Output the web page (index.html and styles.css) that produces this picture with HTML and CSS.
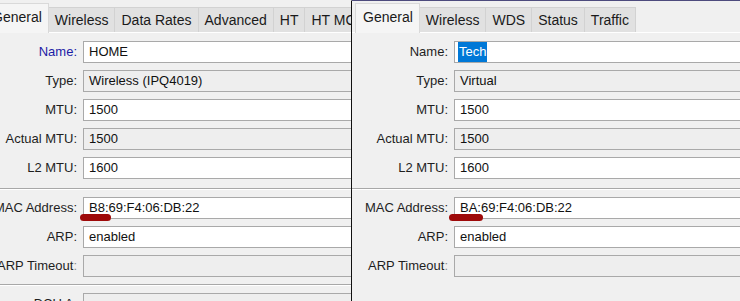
FILE: index.html
```html
<!DOCTYPE html>
<html lang="en">
<head>
    <meta charset="UTF-8">
    <title>Interface settings</title>
    <link rel="stylesheet" href="styles.css">
</head>
<body>
    <div class="screen">
        <div class="pane pane-left">
            <div class="win win-shift">
                <div class="tabs">
                    <div class="tab active">General</div>
                    <div class="tab">Wireless</div>
                    <div class="tab">Data Rates</div>
                    <div class="tab">Advanced</div>
                    <div class="tab">HT</div>
                    <div class="tab">HT MCS</div>
                </div>
                <div class="form">
                    <div class="row"><span class="label label-blue">Name:</span><div class="field">HOME</div></div>
                    <div class="row"><span class="label">Type:</span><div class="field ro">Wireless (IPQ4019)</div></div>
                    <div class="row"><span class="label">MTU:</span><div class="field">1500</div></div>
                    <div class="row"><span class="label">Actual MTU:</span><div class="field ro">1500</div></div>
                    <div class="row"><span class="label">L2 MTU:</span><div class="field">1600</div></div>
                    <div class="sep"></div>
                    <div class="row"><span class="label">MAC Address:</span><div class="field">B8:69:F4:06:DB:22<span class="mark mark-left"></span></div></div>
                    <div class="row"><span class="label">ARP:</span><div class="field">enabled</div></div>
                    <div class="row"><span class="label">ARP Timeout<span class="dim">:</span></span><div class="field ro"></div></div>
                    <div class="sep sep-low"></div>
                    <div class="row"><span class="label">DCU A:</span><div class="field ro"></div></div>
                </div>
            </div>
        </div>
        <div class="pane pane-right">
            <div class="win">
                <div class="tabs">
                    <div class="tab active">General</div>
                    <div class="tab">Wireless</div>
                    <div class="tab">WDS</div>
                    <div class="tab">Status</div>
                    <div class="tab">Traffic</div>
                </div>
                <div class="form">
                    <div class="row"><span class="label">Name:</span><div class="field"><span class="selected">Tech</span></div></div>
                    <div class="row"><span class="label">Type:</span><div class="field ro">Virtual</div></div>
                    <div class="row"><span class="label">MTU:</span><div class="field">1500</div></div>
                    <div class="row"><span class="label">Actual MTU:</span><div class="field ro">1500</div></div>
                    <div class="row"><span class="label">L2 MTU:</span><div class="field">1600</div></div>
                    <div class="sep"></div>
                    <div class="row"><span class="label">MAC Address:</span><div class="field">BA:69:F4:06:DB:22<span class="mark mark-right"></span></div></div>
                    <div class="row"><span class="label">ARP:</span><div class="field">enabled</div></div>
                    <div class="row"><span class="label">ARP Timeout<span class="dim">:</span></span><div class="field ro"></div></div>
                </div>
            </div>
        </div>
    </div>
</body>
</html>
```

FILE: styles.css
```css
/* Reset */
body {
    margin: 0;
    padding: 0;
    font-family: "Liberation Sans", Arial, sans-serif;
    font-size: 13px;
    color: #1e1e1e;
    background-color: #f0f0f0;
}

.screen {
    display: flex;
    width: 740px;
    height: 301px;
    overflow: hidden;
}

.pane {
    overflow: hidden;
    background-color: #f0f0f0;
    border-top: 1px solid #f0f0f0;
}

.pane-left {
    width: 351px;
    flex: none;
    border-right: 1px solid #111;
}

.pane-right {
    flex: 1;
    border-top-color: #4d4b7d;
}

.win {
    width: 420px;
}

.win-shift {
    margin-left: -19px;
}

/* Tabs */
.tabs {
    display: flex;
    align-items: flex-end;
    height: 29px;
    padding: 2px 0 0 3px;
    border-bottom: 1px solid #fff;
    white-space: nowrap;
}

.tab {
    height: 24px;
    line-height: 25px;
    padding: 0 6px;
    font-size: 14px;
    background-color: #e1e1e1;
    border: 1px solid #d2d2d2;
    border-bottom: none;
    border-left: none;
    color: #1a1a1a;
}

.tab.active {
    height: 29px;
    line-height: 26px;
    padding: 0 6px 0 7px;
    background-color: #f5f5f5;
    border-left: 1px solid #d9d9d9;
    border-color: #d9d9d9;
    margin-bottom: -1px;
}

/* Form */
.form {
    padding-top: 8px;
}

.row {
    display: grid;
    grid-template-columns: 96px 1fr;
    column-gap: 6px;
    height: 22px;
    margin-bottom: 7px;
}

.label {
    text-align: right;
    line-height: 22px;
    white-space: nowrap;
}

.label-blue {
    color: #1c1ca6;
}

.dim {
    color: #8a8a8a;
}

.field {
    position: relative;
    height: 20px;
    line-height: 20px;
    padding: 0 5px;
    background-color: #fff;
    border: 1px solid #a9a9a9;
    color: #111;
    white-space: nowrap;
}

.field.ro {
    background-color: #eeeeee;
}

.selected {
    display: inline-block;
    margin-left: -2px;
    padding: 0 1px;
    background-color: #0078d7;
    color: #fff;
}

.sep {
    height: 1px;
    margin: 9px 0 7px;
    background-color: #a8a8a8;
    border-bottom: 1px solid #fff;
}

.sep.sep-low {
    margin: 3px 0 7px;
}

/* red marks drawn over the MAC values */
.mark {
    position: absolute;
    top: 16px;
    height: 7px;
    border-radius: 4px;
    background-color: #9e0a0a;
}

.mark-left {
    left: -4px;
    width: 31px;
}

.mark-right {
    left: -6px;
    width: 34px;
}
```
